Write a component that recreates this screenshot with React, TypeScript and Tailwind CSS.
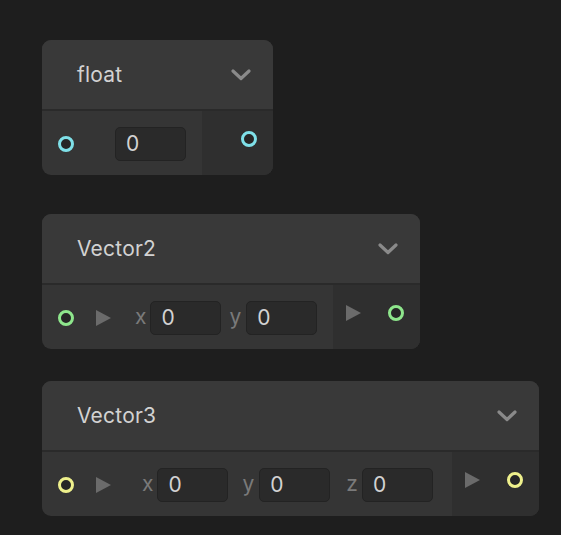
import React from "react";

const Port = ({ color }: { color: string }) => (
  <div
    className="w-[16px] h-[16px] rounded-full border-[3px] bg-[#262626] shrink-0"
    style={{ borderColor: color }}
  />
);

const Tri = () => (
  <svg width="15" height="16" viewBox="0 0 15 16" className="shrink-0">
    <polygon points="0,0 15,8 0,16" fill="#6b6b6b" />
  </svg>
);

const Chevron = () => (
  <svg width="20" height="12" viewBox="0 0 20 12">
    <polyline points="2,2 10,9.5 18,2" fill="none" stroke="#8a8a8a" strokeWidth="3.2" strokeLinecap="round" strokeLinejoin="round" />
  </svg>
);

const Field = () => (
  <div className="w-[71px] h-[34px] rounded-[5px] bg-[#2a2a2a] border border-[#232323] flex items-center pl-[10px] text-[21px] text-[#d2d2d2] shrink-0">
    0
  </div>
);

const Label = ({ t, cls }: { t: string; cls: string }) => (
  <span className={`text-[21px] text-[#7a7a7a] leading-none pb-[3px] ${cls}`}>{t}</span>
);

const Header = ({ title }: { title: string }) => (
  <div className="h-[71px] flex items-center justify-between pl-[35px] pr-[22px] bg-[#393939] border-b-2 border-[#2a2a2a]">
    <span className="text-[21px] text-[#d2d2d2] tracking-[0.2px]">{title}</span>
    <Chevron />
  </div>
);

export default function App() {
  return (
    <div
      className="w-[561px] h-[535px] bg-[#1e1e1e] pt-[40px] pl-[42px] flex flex-col"
      style={{ fontFamily: "Inter, 'Noto Sans', sans-serif" }}
    >
      {/* float */}
      <div className="w-[231px] rounded-[9px] overflow-hidden bg-[#353535]">
        <Header title="float" />
        <div className="h-[64px] flex">
          <div className="flex-1 flex items-center pl-[16px] pt-[1px]">
            <Port color="#7fe0e8" />
            <div className="ml-[41px]"><Field /></div>
          </div>
          <div className="w-[71px] bg-[#2f2f2f] flex items-center justify-end pr-[16px] pb-[8px]">
            <Port color="#7fe0e8" />
          </div>
        </div>
      </div>

      {/* Vector2 */}
      <div className="mt-[39px] w-[378px] rounded-[9px] overflow-hidden bg-[#353535]">
        <Header title="Vector2" />
        <div className="h-[64px] flex">
          <div className="flex-1 flex items-center pl-[16px] pt-[1px]">
            <Port color="#8ee68c" />
            <div className="ml-[22px]"><Tri /></div>
            <Label t="x" cls="ml-[24px]" />
            <div className="ml-[4px]"><Field /></div>
            <Label t="y" cls="ml-[8px]" />
            <div className="ml-[5px]"><Field /></div>
          </div>
          <div className="w-[87px] bg-[#2f2f2f] flex items-center pl-[13px] pb-[8px]">
            <Tri />
            <div className="ml-[27px]"><Port color="#8ee68c" /></div>
          </div>
        </div>
      </div>

      {/* Vector3 */}
      <div className="mt-[32px] w-[497px] rounded-[9px] overflow-hidden bg-[#353535]">
        <Header title="Vector3" />
        <div className="h-[64px] flex">
          <div className="flex-1 flex items-center pl-[16px] pt-[1px]">
            <Port color="#eef08c" />
            <div className="ml-[22px]"><Tri /></div>
            <Label t="x" cls="ml-[31px]" />
            <div className="ml-[4px]"><Field /></div>
            <Label t="y" cls="ml-[14px]" />
            <div className="ml-[5px]"><Field /></div>
            <Label t="z" cls="ml-[16px]" />
            <div className="ml-[4px]"><Field /></div>
          </div>
          <div className="w-[87px] bg-[#2f2f2f] flex items-center pl-[13px] pb-[8px]">
            <Tri />
            <div className="ml-[27px]"><Port color="#eef08c" /></div>
          </div>
        </div>
      </div>
    </div>
  );
}
